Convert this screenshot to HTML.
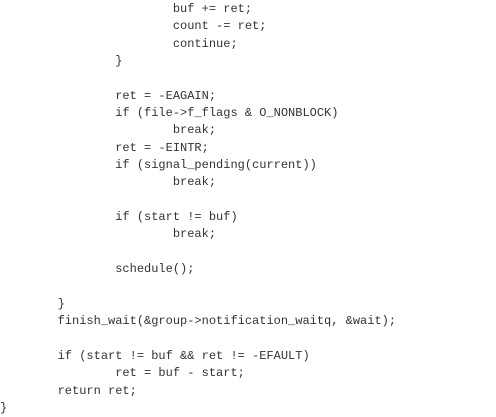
<!DOCTYPE html>
<html><head><style>
html,body{margin:0;padding:0;background:#fff;width:496px;height:410px;overflow:hidden}
pre{margin:0;position:absolute;left:0;top:1px;font-family:"Liberation Mono",monospace;font-size:12px;line-height:17.35px;color:#333;tab-size:8;-moz-tab-size:8}
</style></head><body>
<pre>			buf += ret;
			count -= ret;
			continue;
		}

		ret = -EAGAIN;
		if (file->f_flags &amp; O_NONBLOCK)
			break;
		ret = -EINTR;
		if (signal_pending(current))
			break;

		if (start != buf)
			break;

		schedule();

	}
	finish_wait(&amp;group->notification_waitq, &amp;wait);

	if (start != buf &amp;&amp; ret != -EFAULT)
		ret = buf - start;
	return ret;
}</pre>
</body></html>
